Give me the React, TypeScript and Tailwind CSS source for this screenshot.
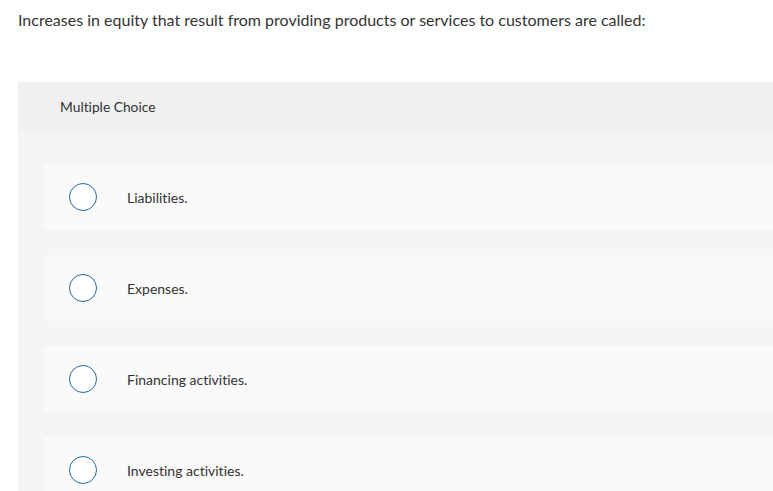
const OPTIONS = ["Liabilities.", "Expenses.", "Financing activities.", "Investing activities."];

export default function App() {
  return (
    <div className="h-[491px] w-[773px] overflow-hidden bg-white font-['Lato',_sans-serif] text-[#333] [font-variant-ligatures:none]">
      <p className="ml-[18px] pt-[10px] text-[16px] leading-[20px]">
        Increases in equity that result from providing products or services to customers are called:
      </p>
      <div className="ml-[18px] mt-[52px] w-[800px] rounded-tl-[3px] bg-[#f5f5f5]">
        <div className="flex h-[50px] items-center bg-[#f0f0f0] pl-[42px] pt-[1px] text-[13.8px]">Multiple Choice</div>
        <div className="flex flex-col gap-[25px] pl-[26px] pt-[32px] pb-[32px]">
          {OPTIONS.map((o) => (
            <div key={o} className="flex h-[66px] items-center rounded-[3px] bg-[#fafafa] pl-[25px]">
              <span className="h-[28px] w-[28px] shrink-0 rounded-full border-[1.5px] border-[#1f6aa5] bg-white" />
              <span className="ml-[30px] text-[14px]">{o}</span>
            </div>
          ))}
        </div>
      </div>
    </div>
  );
}
